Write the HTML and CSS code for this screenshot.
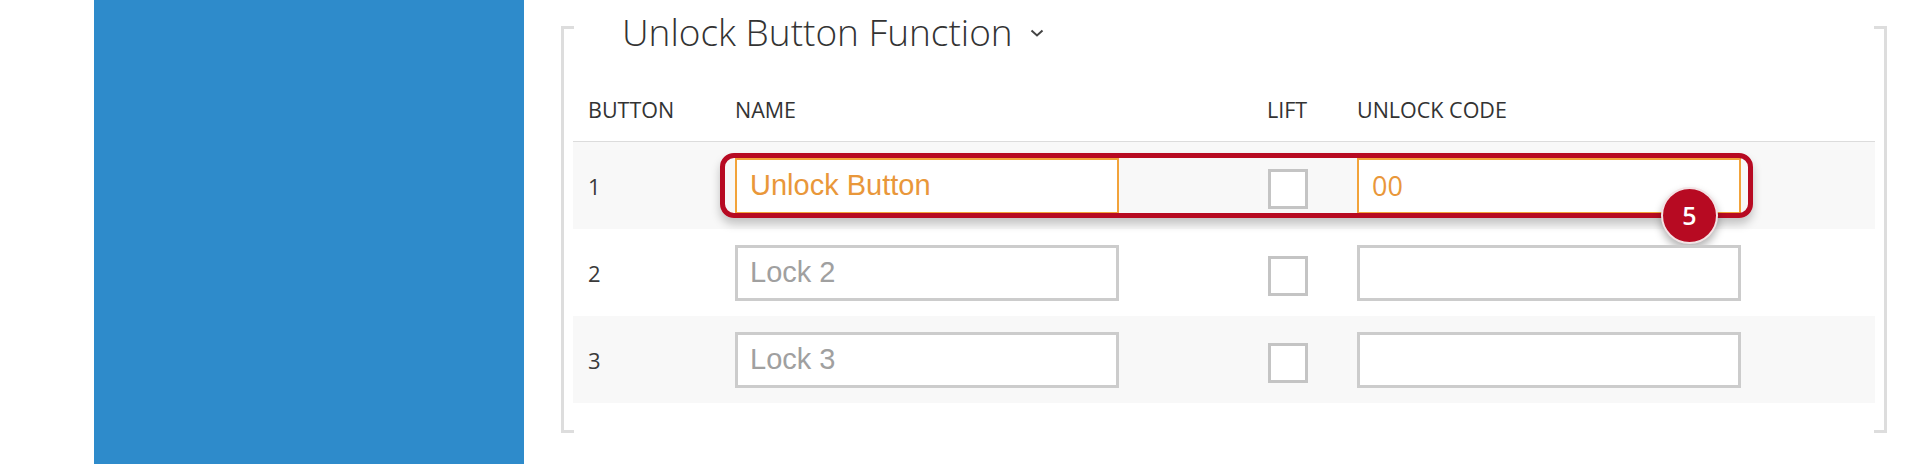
FILE: index.html
```html
<!DOCTYPE html>
<html lang="en">
<head>
<meta charset="utf-8">
<title>Unlock Button Function</title>
<link rel="stylesheet" href="styles.css">
</head>
<body>
<div class="page">
  <aside class="sidebar"></aside>
  <main class="main">
    <section class="fieldset">
      <h2 class="legend">
        <span class="legend-text">Unlock Button Function</span>
        <svg class="chevron" width="14" height="8" viewBox="0 0 14 8"><polyline points="1.5,1.5 7,6.5 12.5,1.5" fill="none" stroke="#444" stroke-width="2"/></svg>
      </h2>
      <div class="row head">
        <div class="cell num">BUTTON</div>
        <div class="cell">NAME</div>
        <div class="cell">LIFT</div>
        <div class="cell">UNLOCK CODE</div>
      </div>
      <div class="row odd first">
        <div class="cell num">1</div>
        <div class="cell"><input class="field active" type="text" value="Unlock Button"></div>
        <div class="cell"><input class="check" type="checkbox"></div>
        <div class="cell"><input class="field active code" type="text" value="00"></div>
        <div class="highlight"></div>
        <div class="badge">5</div>
      </div>
      <div class="row">
        <div class="cell num">2</div>
        <div class="cell"><input class="field" type="text" placeholder="Lock 2"></div>
        <div class="cell"><input class="check" type="checkbox"></div>
        <div class="cell"><input class="field" type="text"></div>
      </div>
      <div class="row odd">
        <div class="cell num">3</div>
        <div class="cell"><input class="field" type="text" placeholder="Lock 3"></div>
        <div class="cell"><input class="check" type="checkbox"></div>
        <div class="cell"><input class="field" type="text"></div>
      </div>
    </section>
  </main>
</div>
</body>
</html>
```

FILE: styles.css
```css
html, body {
  margin: 0;
  padding: 0;
  background: #ffffff;
}

body {
  font-family: "Open Sans", "Liberation Sans", sans-serif;
  color: #333333;
}

.page {
  display: flex;
  height: 464px;
  overflow: hidden;
}

.sidebar {
  flex: none;
  margin-left: 94px;
  width: 430px;
  height: 464px;
  background: #2e8bcb;
}

.main {
  flex: none;
  padding-left: 37px;
  padding-top: 26px;
}

.fieldset {
  display: flow-root;
  box-sizing: border-box;
  width: 1326px;
  height: 407px;
  padding: 0 9px;
  border-left: 3px solid #dddddd;
  border-right: 3px solid #dddddd;
  background:
    linear-gradient(#dddddd, #dddddd) left top / 10px 3px no-repeat,
    linear-gradient(#dddddd, #dddddd) right top / 10px 3px no-repeat,
    linear-gradient(#dddddd, #dddddd) left bottom / 10px 3px no-repeat,
    linear-gradient(#dddddd, #dddddd) right bottom / 10px 3px no-repeat;
}

.legend {
  display: flex;
  align-items: center;
  gap: 17px;
  margin: -14px 0 0 0;
  padding-left: 49px;
  height: 40px;
  font-weight: 300;
  font-size: 37px;
  line-height: 40px;
  color: #333333;
}

.legend-text {
  background: #ffffff;
}

.chevron {
  margin-top: 2px;
}

.row {
  position: relative;
  display: grid;
  grid-template-columns: 162px 532px 90px 1fr;
  align-items: center;
  box-sizing: border-box;
  height: 87px;
}

.row.odd {
  background: #f8f8f8;
}

.row.head {
  height: 90px;
  align-items: end;
  padding-bottom: 19px;
  border-bottom: 1px solid #dcdcdc;
  font-size: 21.5px;
  line-height: 25px;
  color: #333333;
}

.cell.num {
  padding-left: 15px;
}

.row:not(.head) .cell.num {
  font-size: 22px;
  font-weight: 400;
  color: #3a3a3a;
}

.field {
  display: block;
  box-sizing: border-box;
  width: 384px;
  height: 56px;
  margin: 0;
  padding: 0 12px;
  border: 3px solid #cccccc;
  background: #ffffff;
  font-family: "Liberation Sans", Arial, sans-serif;
  font-size: 29px;
  color: #555555;
  outline: none;
}

.field::placeholder {
  color: #a0a0a0;
}

.field.active {
  border: 2px solid #f2a33a;
  padding-left: 13px;
  color: #e9973a;
}

.field.code {
  font-family: "Open Sans", sans-serif;
  font-weight: 400;
  font-size: 27px;
}

.check {
  appearance: none;
  -webkit-appearance: none;
  display: block;
  box-sizing: border-box;
  width: 40px;
  height: 40px;
  margin: 6px 0 0 1px;
  border: 3px solid #c4c4c4;
  background: #ffffff;
}

.highlight {
  position: absolute;
  left: 147px;
  top: 11px;
  width: 1033px;
  height: 65px;
  box-sizing: border-box;
  border: 5px solid #b70a22;
  border-radius: 14px;
  box-shadow: 0 6px 10px rgba(0, 0, 0, 0.22);
  pointer-events: none;
}

.badge {
  position: absolute;
  left: 1088px;
  top: 45px;
  width: 57px;
  height: 57px;
  box-sizing: border-box;
  border: 2px solid #f3e3e5;
  border-radius: 50%;
  background: #b70a22;
  box-shadow: 0 5px 8px rgba(0, 0, 0, 0.3);
  color: #ffffff;
  font-family: "Open Sans", sans-serif;
  font-weight: 600;
  font-size: 25px;
  line-height: 53px;
  text-align: center;
}
```
